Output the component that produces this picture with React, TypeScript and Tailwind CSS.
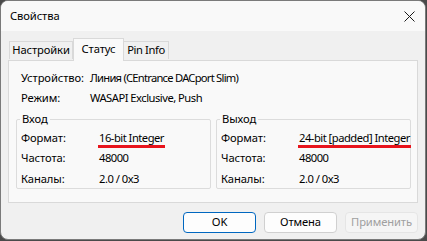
import { ReactNode } from "react";

const font = { fontFamily: '"Noto Sans", "Open Sans", sans-serif' };

function Marked({ children }: { children: ReactNode }) {
  return (
    <span className="relative inline-block">
      {children}
      <span className="absolute -left-px -right-px top-[15px] h-[3px] bg-[#e8141c]" />
    </span>
  );
}

function Row({ label, value, col }: { label: string; value: ReactNode; col: string }) {
  return (
    <div className="flex h-[20.5px] items-center whitespace-nowrap">
      <div className={`shrink-0 ${col}`}>{label}</div>
      <div className="tracking-[-0.5px]">{value}</div>
    </div>
  );
}

function Group({ title, rows }: { title: string; rows: [string, ReactNode][] }) {
  return (
    <div className="relative h-[70px] w-[195px] rounded-[2px] border border-[#dcdcdc] pl-[4px] pt-[8px]">
      <span className="absolute -top-[9px] left-[3px] bg-[#f9f9f9] px-[2px] leading-4">{title}</span>
      {rows.map(([l, v]) => (
        <Row key={l} label={l} value={v} col="w-[78px]" />
      ))}
    </div>
  );
}

function Button({ children, kind }: { children: ReactNode; kind: "default" | "normal" | "disabled" }) {
  const cls =
    kind === "default"
      ? "border-[#0067c0] bg-[#fdfdfd] text-black"
      : kind === "normal"
      ? "border-[#d0d0d0] bg-[#fdfdfd] text-black"
      : "border-[#e5e5e5] bg-[#f5f5f5] text-[#a0a0a0]";
  return (
    <div className={`flex h-[21px] w-[73px] items-center justify-center rounded-[4px] border ${cls}`}>{children}</div>
  );
}

export default function App() {
  return (
    <div className="h-[241px] w-[427px] bg-[#4a4a4a] text-[11.2px] tracking-[-0.1px] text-black" style={font}>
      <div className="flex h-[240px] w-[426px] flex-col overflow-hidden rounded-[8px] border border-[#7a7a7a] bg-[#f0f0f0]">
        <div className="flex h-[30px] shrink-0 items-center justify-between bg-[#f9f9f9] pl-[9px] pr-[9px]">
          <span>Свойства</span>
          <svg width="11" height="11" viewBox="0 0 11 11" className="mr-[1px]">
            <path d="M0.5 0.5 L10.5 10.5 M10.5 0.5 L0.5 10.5" stroke="#1a1a1a" strokeWidth="1" />
          </svg>
        </div>

        <div className="px-[7px] pt-[7px]">
          <div className="ml-[1px] flex h-[22px] items-end">
            <div className="mb-px flex h-[18px] w-[64px] items-center justify-center border border-b-0 border-[#d9d9d9] bg-[#f0f0f0]">
              Настройки
            </div>
            <div className="relative z-10 -mb-px flex h-[23px] w-[51px] items-center justify-center border border-b-0 border-[#d9d9d9] bg-[#f9f9f9] pb-[2px]">
              Статус
            </div>
            <div className="mb-px flex h-[18px] w-[45px] items-center justify-center border border-b-0 border-l-0 border-[#d9d9d9] bg-[#f0f0f0] tracking-[-0.4px]">
              Pin Info
            </div>
          </div>

          <div className="h-[143px] w-[410px] border border-[#d9d9d9] bg-[#f9f9f9] pl-[7px] pt-[7px]">
            <div className="ml-[5px]">
              <Row label="Устройство:" value={<span className="tracking-[-0.75px]">Линия (CEntrance DACport Slim)</span>} col="w-[69px]" />
              <Row label="Режим:" value="WASAPI Exclusive, Push" col="w-[69px]" />
            </div>
            <div className="mt-[10px] flex gap-[5px]">
              <Group
                title="Вход"
                rows={[
                  ["Формат:", <Marked>16-bit Integer</Marked>],
                  ["Частота:", "48000"],
                  ["Каналы:", "2.0 / 0x3"],
                ]}
              />
              <Group
                title="Выход"
                rows={[
                  ["Формат:", <Marked>24-bit [padded] Integer</Marked>],
                  ["Частота:", "48000"],
                  ["Каналы:", "2.0 / 0x3"],
                ]}
              />
            </div>
          </div>

          <div className="mt-[9px] flex justify-end gap-[8px]">
            <Button kind="default">OK</Button>
            <Button kind="normal">Отмена</Button>
            <Button kind="disabled">Применить</Button>
          </div>
        </div>
      </div>
    </div>
  );
}
